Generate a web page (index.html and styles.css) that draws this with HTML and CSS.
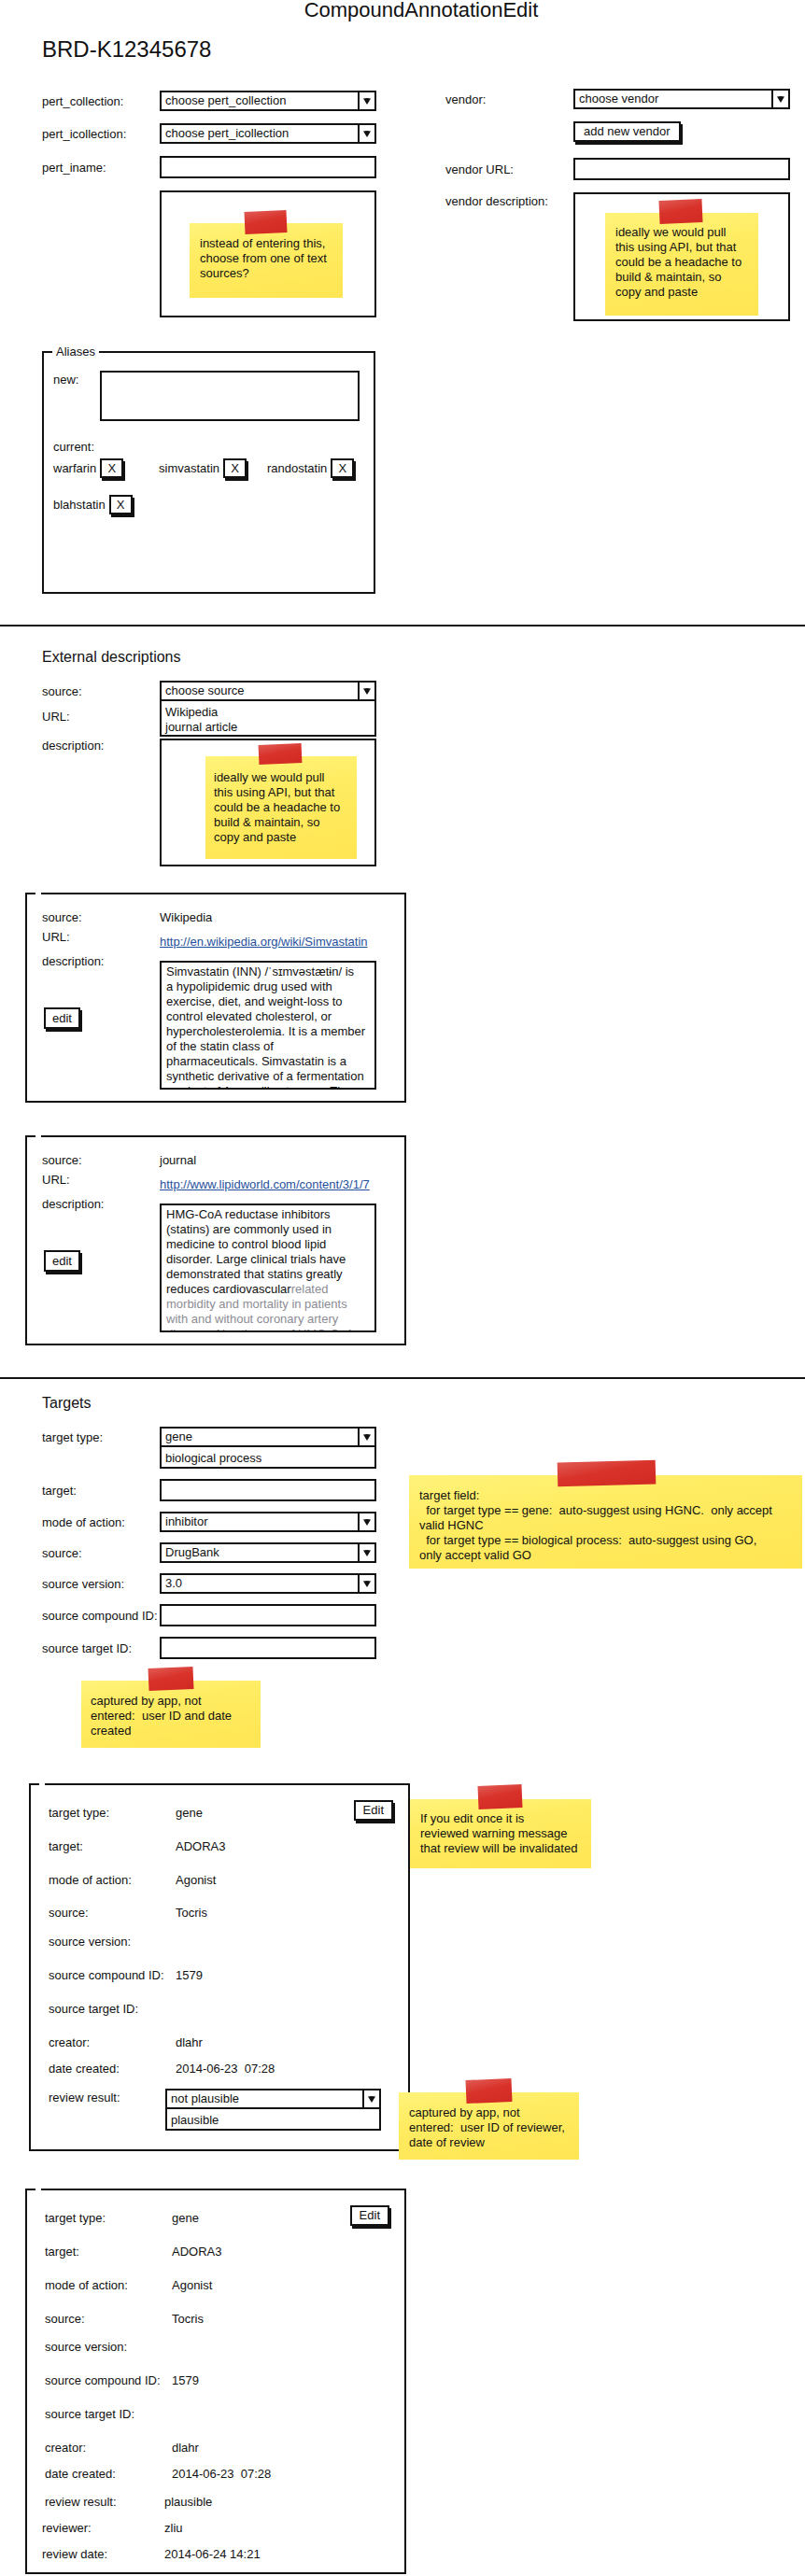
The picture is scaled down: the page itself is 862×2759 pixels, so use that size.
FILE: index.html
```html
<!DOCTYPE html>
<html lang="en">
<head>
    <meta charset="UTF-8">
    <meta name="viewport" content="width=device-width, initial-scale=1.0">
    <title>CompoundAnnotationEdit</title>
    <link rel="stylesheet" href="styles.css">
</head>
<body>
    <h1 class="title">CompoundAnnotationEdit</h1>

    <main>
        <section class="pane">
            <h2 class="compound-id">BRD-K12345678</h2>

            <div class="top">
                <div class="col col-left">
                    <div class="field">
                        <label>pert_collection:</label>
                        <div class="select"><span class="select-value">choose pert_collection</span><span class="select-arrow"><svg width="10" height="9" viewBox="0 0 10 9"><path d="M1 1.5 Q5 0.6 9 1.5 L5 8 Z" fill="#111"/></svg></span></div>
                    </div>
                    <div class="field">
                        <label>pert_icollection:</label>
                        <div class="select"><span class="select-value">choose pert_icollection</span><span class="select-arrow"><svg width="10" height="9" viewBox="0 0 10 9"><path d="M1 1.5 Q5 0.6 9 1.5 L5 8 Z" fill="#111"/></svg></span></div>
                    </div>
                    <div class="field">
                        <label>pert_iname:</label>
                        <div class="input"></div>
                    </div>
                    <div class="field field-top">
                        <span></span>
                        <div class="box box-pert">
                            <div class="note note-pert"><span class="tape"></span><p>instead of entering this,<br>choose from one of text<br>sources?</p></div>
                        </div>
                    </div>
                </div>

                <div class="col col-right">
                    <div class="field">
                        <label>vendor:</label>
                        <div class="select"><span class="select-value">choose vendor</span><span class="select-arrow"><svg width="10" height="9" viewBox="0 0 10 9"><path d="M1 1.5 Q5 0.6 9 1.5 L5 8 Z" fill="#111"/></svg></span></div>
                    </div>
                    <div class="field field-btn">
                        <span></span>
                        <div><span class="btn">add new vendor</span></div>
                    </div>
                    <div class="field">
                        <label>vendor URL:</label>
                        <div class="input"></div>
                    </div>
                    <div class="field field-top">
                        <label>vendor description:</label>
                        <div class="box box-vendor">
                            <div class="note note-vendor"><span class="tape"></span><p>ideally we would pull<br>this using API, but that<br>could be a headache to<br>build &amp; maintain, so<br>copy and paste</p></div>
                        </div>
                    </div>
                </div>
            </div>

            <div class="aliases">
                <span class="legend">Aliases</span>
                <div class="alias-new">
                    <label>new:</label>
                    <div class="box box-alias"></div>
                </div>
                <div class="alias-current">current:</div>
                <div class="alias-list">
                    <div class="alias"><span>warfarin</span><span class="btn btn-x">X</span></div>
                    <div class="alias"><span>simvastatin</span><span class="btn btn-x">X</span></div>
                    <div class="alias"><span>randostatin</span><span class="btn btn-x">X</span></div>
                    <div class="alias"><span>blahstatin</span><span class="btn btn-x">X</span></div>
                </div>
            </div>
        </section>

        <hr class="divider">

        <section class="pane">
            <h2 class="section-title">External descriptions</h2>

            <div class="ext-form">
                <label>source:</label>
                <div class="select"><span class="select-value">choose source</span><span class="select-arrow"><svg width="10" height="9" viewBox="0 0 10 9"><path d="M1 1.5 Q5 0.6 9 1.5 L5 8 Z" fill="#111"/></svg></span></div>
                <label class="lbl-url">URL:</label>
                <div class="select-list ext-list"><div>Wikipedia</div><div>journal article</div></div>
                <label class="lbl-desc">description:</label>
                <div class="box box-ext">
                    <div class="note note-ext"><span class="tape"></span><p>ideally we would pull<br>this using API, but that<br>could be a headache to<br>build &amp; maintain, so<br>copy and paste</p></div>
                </div>
            </div>

            <div class="card card-desc">
                <div class="desc-labels">
                    <div>source:</div>
                    <div>URL:</div>
                    <div class="desc-label">description:</div>
                    <span class="btn btn-edit">edit</span>
                </div>
                <div class="desc-values">
                    <div>Wikipedia</div>
                    <a class="link" href="#">http://en.wikipedia.org/wiki/Simvastatin</a>
                    <div class="desc-text">Simvastatin (INN) /ˈsɪmvəstætɨn/ is<br>a hypolipidemic drug used with<br>exercise, diet, and weight-loss to<br>control elevated cholesterol, or<br>hypercholesterolemia. It is a member<br>of the statin class of<br>pharmaceuticals. Simvastatin is a<br>synthetic derivative of a fermentation<br>product of Aspergillus terreus. The</div>
                </div>
            </div>

            <div class="card card-desc">
                <div class="desc-labels">
                    <div>source:</div>
                    <div>URL:</div>
                    <div class="desc-label">description:</div>
                    <span class="btn btn-edit">edit</span>
                </div>
                <div class="desc-values">
                    <div>journal</div>
                    <a class="link" href="#">http://www.lipidworld.com/content/3/1/7</a>
                    <div class="desc-text">HMG-CoA reductase inhibitors<br>(statins) are commonly used in<br>medicine to control blood lipid<br>disorder. Large clinical trials have<br>demonstrated that statins greatly<br>reduces cardiovascular<span class="faded">related<br>morbidity and mortality in patients<br>with and without coronary artery<br>disease. Also the use of HMG-CoA</span></div>
                </div>
            </div>
        </section>

        <hr class="divider divider-targets">

        <section class="pane">
            <h2 class="section-title targets-title">Targets</h2>

            <div class="targets">
                <div class="target-form">
                    <div class="target-grid">
                        <label class="lbl-top">target type:</label>
                        <div>
                            <div class="select"><span class="select-value">gene</span><span class="select-arrow"><svg width="10" height="9" viewBox="0 0 10 9"><path d="M1 1.5 Q5 0.6 9 1.5 L5 8 Z" fill="#111"/></svg></span></div>
                            <div class="select-list"><div>biological process</div></div>
                        </div>
                        <label>target:</label>
                        <div class="input"></div>
                        <label>mode of action:</label>
                        <div class="select"><span class="select-value">inhibitor</span><span class="select-arrow"><svg width="10" height="9" viewBox="0 0 10 9"><path d="M1 1.5 Q5 0.6 9 1.5 L5 8 Z" fill="#111"/></svg></span></div>
                        <label>source:</label>
                        <div class="select"><span class="select-value">DrugBank</span><span class="select-arrow"><svg width="10" height="9" viewBox="0 0 10 9"><path d="M1 1.5 Q5 0.6 9 1.5 L5 8 Z" fill="#111"/></svg></span></div>
                        <label>source version:</label>
                        <div class="select"><span class="select-value">3.0</span><span class="select-arrow"><svg width="10" height="9" viewBox="0 0 10 9"><path d="M1 1.5 Q5 0.6 9 1.5 L5 8 Z" fill="#111"/></svg></span></div>
                        <label>source compound ID:</label>
                        <div class="input"></div>
                        <label>source target ID:</label>
                        <div class="input"></div>
                    </div>
                    <div class="note note-created"><span class="tape"></span><p>captured by app, not<br>entered:  user ID and date<br>created</p></div>
                </div>
                <div class="note note-wide"><span class="tape"></span><p>target field:<br>  for target type == gene:  auto-suggest using HGNC.  only accept<br>valid HGNC<br>  for target type == biological process:  auto-suggest using GO,<br>only accept valid GO</p></div>
            </div>

            <div class="card-row">
                <div class="card card-target">
                    <div class="dl-row"><span>target type:</span><span>gene</span><span class="btn btn-edit2">Edit</span></div>
                    <div class="dl-row"><span>target:</span><span>ADORA3</span></div>
                    <div class="dl-row h35"><span>mode of action:</span><span>Agonist</span></div>
                    <div class="dl-row h31"><span>source:</span><span>Tocris</span></div>
                    <div class="dl-row"><span>source version:</span><span></span></div>
                    <div class="dl-row"><span>source compound ID:</span><span>1579</span></div>
                    <div class="dl-row"><span>source target ID:</span><span></span></div>
                    <div class="dl-row h28"><span>creator:</span><span>dlahr</span></div>
                    <div class="dl-row h31"><span>date created:</span><span>2014-06-23&nbsp; 07:28</span></div>
                    <div class="dl-row review-edit">
                        <span>review result:</span>
                        <div class="review-select">
                            <div class="select"><span class="select-value">not plausible</span><span class="select-arrow"><svg width="10" height="9" viewBox="0 0 10 9"><path d="M1 1.5 Q5 0.6 9 1.5 L5 8 Z" fill="#111"/></svg></span></div>
                            <div class="select-list"><div>plausible</div></div>
                        </div>
                    </div>
                </div>
                <div class="side-notes">
                    <div class="note note-edit"><span class="tape"></span><p>If you edit once it is<br>reviewed warning message<br>that review will be invalidated</p></div>
                    <div class="note note-review"><span class="tape"></span><p>captured by app, not<br>entered:  user ID of reviewer,<br>date of review</p></div>
                </div>
            </div>

            <div class="card card-target card-last">
                <div class="dl-row"><span>target type:</span><span>gene</span><span class="btn btn-edit2">Edit</span></div>
                <div class="dl-row"><span>target:</span><span>ADORA3</span></div>
                <div class="dl-row"><span>mode of action:</span><span>Agonist</span></div>
                <div class="dl-row h30"><span>source:</span><span>Tocris</span></div>
                <div class="dl-row"><span>source version:</span><span></span></div>
                <div class="dl-row"><span>source compound ID:</span><span>1579</span></div>
                <div class="dl-row"><span>source target ID:</span><span></span></div>
                <div class="dl-row h28"><span>creator:</span><span>dlahr</span></div>
                <div class="dl-row h30"><span>date created:</span><span>2014-06-23&nbsp; 07:28</span></div>
                <div class="dl-row h28 review"><span>review result:</span><span>plausible</span></div>
                <div class="dl-row h28 review shift"><span>reviewer:</span><span>zliu</span></div>
                <div class="dl-row h15 review shift"><span>review date:</span><span>2014-06-24 14:21</span></div>
            </div>
        </section>
    </main>
</body>
</html>
```

FILE: styles.css
```css
body {
    font-family: "Liberation Sans", Arial, sans-serif;
    font-size: 13px;
    line-height: 15px;
    color: #111;
    background-color: #fff;
    margin: 0;
    padding: 0;
    overflow-x: hidden;
}
label {
    display: block;
}
.title {
    margin: 0;
    font-size: 22px;
    line-height: 22px;
    font-weight: normal;
    text-align: center;
    padding-left: 40px;
}
.pane {
    padding-left: 45px;
}
.compound-id {
    margin: 17px 0 0;
    font-size: 24px;
    line-height: 28px;
    font-weight: normal;
}
.section-title {
    margin: 23px 0 0;
    font-size: 16px;
    line-height: 19px;
    font-weight: normal;
}
.targets-title {
    margin-top: 16px;
}
.divider {
    border: 0;
    height: 2px;
    background-color: #151515;
    margin: 33px 0 0;
}
.divider-targets {
    margin-top: 34px;
}

/* form controls */
.select {
    display: flex;
    height: 22px;
    box-sizing: border-box;
    border: 2px solid #111;
    background: #fff;
}
.select-value {
    flex: 1;
    padding-left: 4px;
    line-height: 18px;
    white-space: nowrap;
    overflow: hidden;
}
.select-arrow {
    width: 16px;
    border-left: 2px solid #111;
    display: flex;
    align-items: center;
    justify-content: center;
}
.select-list {
    border: 2px solid #111;
    border-top: 0;
    padding: 4px 4px 1px;
    line-height: 16px;
}
.ext-list {
    padding-bottom: 0;
}
.input {
    height: 24px;
    box-sizing: border-box;
    border: 2px solid #111;
}
.box {
    box-sizing: border-box;
    border: 2px solid #111;
    overflow: hidden;
}
.btn {
    display: inline-block;
    box-sizing: border-box;
    height: 22px;
    line-height: 18px;
    padding: 0 9px;
    border: 2px solid #111;
    background: #fff;
    box-shadow: 2px 3px 0 #111;
    white-space: nowrap;
}

/* top section */
.top {
    display: flex;
    gap: 74px;
    margin-top: 28px;
}
.col {
    display: flex;
    flex-direction: column;
    gap: 13px;
}
.col-left {
    padding-top: 2px;
}
.field {
    display: grid;
    grid-template-columns: 126px 232px;
    align-items: center;
}
.col-right .field {
    grid-template-columns: 137px 232px;
}
.field-top {
    align-items: start;
}
.field-top label {
    padding-top: 2px;
}
.field-btn {
    height: 26px;
    align-items: start;
}
.box-pert {
    height: 136px;
}
.box-vendor {
    height: 138px;
}

/* sticky notes */
.note {
    position: relative;
    box-sizing: border-box;
    background: linear-gradient(172deg, #fff37a 0%, #ffec62 35%, #ffe552 100%);
}
.note p {
    margin: 0;
    white-space: pre;
    line-height: 16px;
}
.tape {
    position: absolute;
    top: -13px;
    height: 24px;
    background: linear-gradient(170deg, #e05a53 0%, #d8322a 45%, #d02a22 100%);
    transform: rotate(-2.5deg);
}
.note-pert {
    width: 164px;
    height: 80px;
    margin: 33px 0 0 30px;
    padding: 14px 0 0 11px;
}
.note-pert .tape {
    left: 59px;
    width: 45px;
}
.note-vendor {
    width: 164px;
    height: 110px;
    margin: 20px 0 0 32px;
    padding: 13px 0 0 11px;
}
.note-vendor .tape {
    left: 58px;
    width: 46px;
    top: -14px;
    height: 25px;
}
.note-ext {
    width: 162px;
    height: 110px;
    margin: 17px 0 0 47px;
    padding: 15px 0 0 9px;
}
.note-ext .tape {
    left: 57px;
    width: 46px;
    height: 21px;
}
.note-created {
    width: 192px;
    height: 72px;
    margin: 23px 0 0 42px;
    padding: 14px 0 0 10px;
}
.note-created .tape {
    left: 72px;
    width: 48px;
    top: -14px;
}
.note-wide {
    width: 421px;
    height: 100px;
    margin: 52px 0 0 35px;
    padding: 14px 0 0 11px;
}
.note-wide .tape {
    left: 159px;
    width: 105px;
    top: -15px;
    height: 26px;
    transform: rotate(-1.5deg);
}
.note-edit {
    width: 194px;
    height: 74px;
    padding: 13px 0 0 11px;
}
.note-edit .tape {
    left: 73px;
    width: 47px;
    top: -15px;
    height: 25px;
}
.note-review {
    width: 193px;
    height: 72px;
    margin: 240px 0 0 -12px;
    padding: 14px 0 0 11px;
}
.note-review .tape {
    left: 72px;
    width: 49px;
    top: -14px;
    height: 25px;
}

/* aliases */
.aliases {
    position: relative;
    width: 357px;
    height: 260px;
    box-sizing: border-box;
    border: 2px solid #111;
    margin-top: 32px;
    padding: 19px 0 0 10px;
}
.legend {
    position: absolute;
    top: -9px;
    left: 9px;
    padding: 0 4px;
    background: #fff;
}
.alias-new {
    display: grid;
    grid-template-columns: 50px 278px;
    align-items: start;
}
.alias-new label {
    padding-top: 2px;
}
.box-alias {
    height: 54px;
}
.alias-current {
    margin-top: 20px;
}
.alias-list {
    display: grid;
    grid-template-columns: 113px 116px auto;
    row-gap: 18px;
    margin-top: 5px;
}
.alias {
    display: flex;
    align-items: center;
    gap: 4px;
}
.btn-x {
    width: 25px;
    height: 21px;
    line-height: 17px;
    padding: 0;
    text-align: center;
}

/* external descriptions */
.ext-form {
    display: grid;
    grid-template-columns: 126px 232px;
    align-items: start;
    margin-top: 16px;
}
.ext-form label:first-child {
    padding-top: 4px;
}
.lbl-url {
    padding-top: 9px;
}
.lbl-desc {
    margin-top: 2px;
}
.box-ext {
    height: 137px;
    margin-top: 2px;
}
.card {
    position: relative;
    box-sizing: border-box;
    border: 2px solid #111;
    background: #fff;
}
.card::before {
    content: "";
    position: absolute;
    top: -2px;
    left: 9px;
    width: 6px;
    height: 2px;
    background: #fff;
}
.card-desc {
    width: 408px;
    height: 225px;
    margin-left: -18px;
    display: grid;
    grid-template-columns: 126px 232px;
    padding: 14px 0 0 16px;
}
.card-desc + .card-desc {
    margin-top: 35px;
}
.ext-form + .card-desc {
    margin-top: 28px;
}
.desc-labels,
.desc-values {
    line-height: 21px;
}
.desc-label {
    margin-top: 5px;
}
.btn-edit {
    margin: 39px 0 0 2px;
    height: 23px;
    line-height: 19px;
    padding: 0 7px;
}
.link {
    display: block;
    margin-top: 5px;
    color: #1f4f9c;
    text-decoration: underline;
    white-space: nowrap;
}
.desc-text {
    margin-top: 10px;
    height: 138px;
    box-sizing: border-box;
    border: 2px solid #111;
    padding: 2px 0 0 5px;
    line-height: 16px;
    white-space: nowrap;
    overflow: hidden;
}
.faded {
    color: #8c8c94;
}

/* targets */
.targets {
    display: flex;
    align-items: flex-start;
    margin-top: 16px;
}
.target-form {
    width: 358px;
}
.target-grid {
    display: grid;
    grid-template-columns: 126px 232px;
    row-gap: 11px;
    align-items: center;
}
.target-grid .lbl-top {
    align-self: start;
    padding-top: 4px;
}
.card-row {
    display: flex;
    align-items: flex-start;
    margin: 38px 0 0 -14px;
}
.side-notes {
    display: flex;
    flex-direction: column;
    margin-top: 17px;
}
.card-target {
    width: 408px;
    padding: 22px 16px 20px 19px;
}
.card-last {
    margin: 31px 0 0 -18px;
    padding-bottom: 12px;
}
.dl-row {
    display: grid;
    grid-template-columns: 136px 1fr auto;
    height: 36px;
    align-items: start;
    white-space: nowrap;
}
.dl-row.h35 { height: 35px; }
.dl-row.h31 { height: 31px; }
.dl-row.h30 { height: 30px; }
.dl-row.h28 { height: 28px; }
.dl-row.h15 { height: 15px; }
.dl-row.review {
    grid-template-columns: 128px 1fr;
}
.dl-row.shift {
    margin-left: -3px;
    grid-template-columns: 131px 1fr;
}
.review-edit {
    height: auto;
}
.review-select {
    margin: -2px 0 0 -11px;
    width: 231px;
}
.btn-edit2 {
    margin-top: -6px;
    padding: 0 8px;
}
```
